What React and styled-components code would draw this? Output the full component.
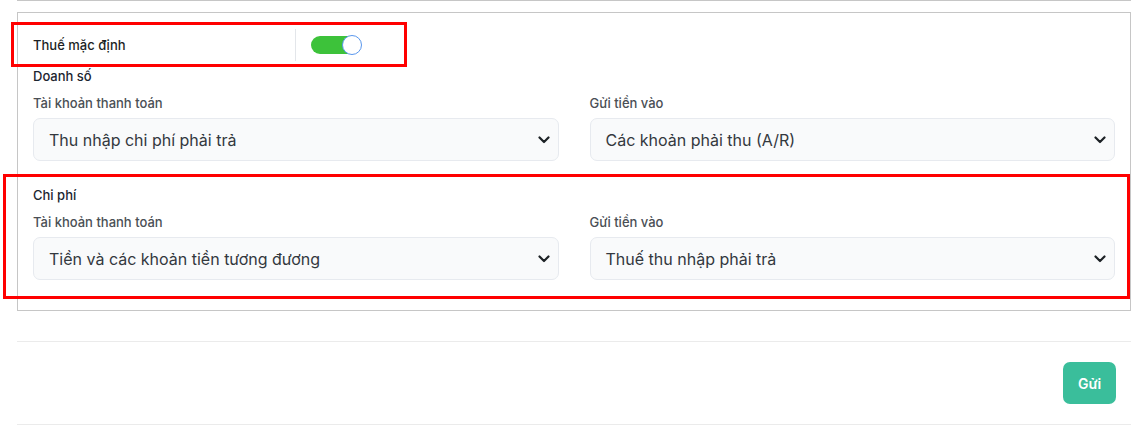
import React from 'react'
import styled, { createGlobalStyle } from 'styled-components'

const GlobalStyle = createGlobalStyle`
    body {
        margin: 0;
        background: #ffffff;
        font-family: Inter, "Noto Sans", sans-serif;
    }
`

const sections = [
    {
        id: 'sales',
        title: 'Doanh số',
        pay: 'Thu nhập chi phí phải trả',
        deposit: 'Các khoản phải thu (A/R)',
    },
    {
        id: 'cost',
        title: 'Chi phí',
        pay: 'Tiền và các khoản tiền tương đương',
        deposit: 'Thuế thu nhập phải trả',
        marked: true,
    },
]

const Chevron = () => (
    <svg width="12" height="8" viewBox="0 0 12 8" fill="none">
        <path d="M1.5 1.5L6 6L10.5 1.5" stroke="#1d2226" strokeWidth="2.2" strokeLinecap="round" strokeLinejoin="round" />
    </svg>
)

const SelectField = ({ label, value }) => (
    <Field>
        <Label>{label}</Label>
        <SelectBox>
            <span>{value}</span>
            <Chevron />
        </SelectBox>
    </Field>
)

const App = () => {
    return (
        <>
            <GlobalStyle />
            <Page>
                <PrevBox />
                <TaxBox>
                    <TaxRow>
                        <TaxName>Thuế mặc định</TaxName>
                        <Divider />
                        <Toggle>
                            <Knob />
                        </Toggle>
                        <Marker $left={-7} $top={9} $width={396} $height={45} />
                    </TaxRow>
                    {sections.map((section) => (
                        <Section key={section.id}>
                            <SectionTitle>{section.title}</SectionTitle>
                            <FieldGrid>
                                <SelectField label="Tài khoản thanh toán" value={section.pay} />
                                <SelectField label="Gửi tiền vào" value={section.deposit} />
                            </FieldGrid>
                            {section.marked && <Marker $left={-30} $top={-13} $width={1127} $height={125} />}
                        </Section>
                    ))}
                </TaxBox>
                <Footer>
                    <SubmitButton>Gửi</SubmitButton>
                </Footer>
            </Page>
        </>
    )
}

const Page = styled.div`
    width: 1114px;
    padding-left: 17px;
`

const PrevBox = styled.div`
    height: 1px;
    width: 1114px;
    box-sizing: border-box;
    border: 1px solid #c6c6c6;
    border-top: none;
`

const TaxBox = styled.div`
    position: relative;
    margin-top: 11px;
    width: 1114px;
    box-sizing: border-box;
    border: 1px solid #c6c6c6;
    padding: 15px 15px 30px 15px;
`

const TaxRow = styled.div`
    display: flex;
    align-items: center;
    height: 34px;
`

const TaxName = styled.div`
    width: 262px;
    font-size: 13px;
    font-weight: 500;
    color: #1c1f24;
`

const Divider = styled.div`
    width: 1px;
    height: 32px;
    background: #e3e6ea;
    margin-right: 15px;
`

const Toggle = styled.div`
    position: relative;
    width: 50px;
    height: 18px;
    border-radius: 9px;
    background: #3dc23a;
`

const Knob = styled.div`
    position: absolute;
    right: -1px;
    top: -1px;
    width: 18px;
    height: 18px;
    border-radius: 50%;
    background: #ffffff;
    border: 1px solid #5a97ee;
`

const Marker = styled.div`
    position: absolute;
    left: ${(p) => p.$left}px;
    top: ${(p) => p.$top}px;
    width: ${(p) => p.$width}px;
    height: ${(p) => p.$height}px;
    box-sizing: border-box;
    border: 3px solid #ff0000;
    pointer-events: none;
`

const Section = styled.section`
    position: relative;
    margin-top: 6px;

    & + & {
        margin-top: 26px;
    }
`

const SectionTitle = styled.div`
    font-size: 13px;
    line-height: 16px;
    font-weight: 500;
    color: #1c2530;
`

const FieldGrid = styled.div`
    display: grid;
    grid-template-columns: 1fr 1fr;
    column-gap: 31px;
    margin-top: 11px;
`

const Field = styled.div`
    display: flex;
    flex-direction: column;
`

const Label = styled.div`
    font-size: 13px;
    line-height: 16px;
    font-weight: 500;
    color: #4a4f55;
    margin-bottom: 7px;
`

const SelectBox = styled.div`
    display: flex;
    align-items: center;
    justify-content: space-between;
    height: 43px;
    box-sizing: border-box;
    padding: 0 8px 0 15px;
    border: 1px solid #e7eaef;
    border-radius: 7px;
    background: #f9fafb;
    font-size: 16px;
    color: #33383e;
`

const Footer = styled.div`
    margin-top: 30px;
    width: 1114px;
    border-top: 1px solid #ebebeb;
    border-bottom: 1px solid #ebebeb;
    padding: 20px 15px 20px 0;
    box-sizing: border-box;
    display: flex;
    justify-content: flex-end;
`

const SubmitButton = styled.button`
    width: 53px;
    height: 42px;
    border: none;
    border-radius: 7px;
    background: #3abe9b;
    color: #ffffff;
    font-family: Inter, "Noto Sans", sans-serif;
    font-size: 14px;
    font-weight: 600;
    cursor: pointer;
`

export default App
